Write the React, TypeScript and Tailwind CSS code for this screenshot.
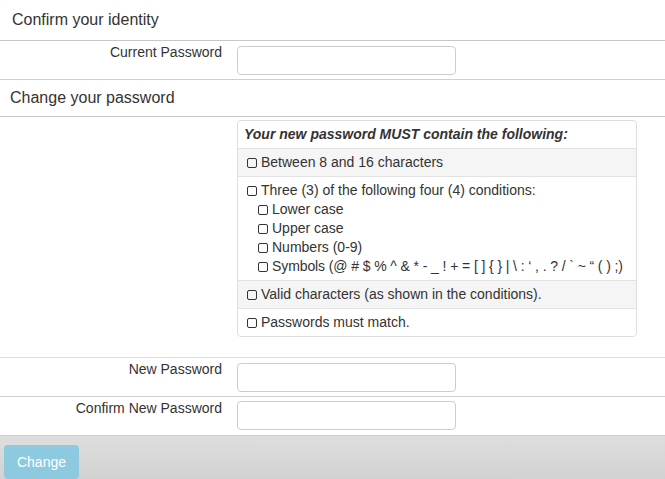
import React from "react";

function Box() {
  return (
    <span className="inline-block w-[10px] h-[10px] border border-[#333] rounded-[2px] mr-[4px] align-[-1px]" />
  );
}

function Row({ label }: { label: string }) {
  return (
    <div className="flex h-[39px] border-b border-[#cfcfcf]">
      <div className="w-[222px] text-right text-[14px] leading-[20px] pt-[1px]">{label}</div>
      <div className="ml-[15px] pt-[5px]">
        <input
          type="password"
          className="w-[219px] h-[29px] border border-[#ccc] rounded-[4px] bg-white outline-none"
        />
      </div>
    </div>
  );
}

export default function App() {
  return (
    <div
      className="w-[665px] h-[479px] bg-white text-[#333] overflow-hidden flex flex-col"
      style={{ fontFamily: '"Liberation Sans", Arial, sans-serif' }}
    >
      <div className="h-[41px] border-b border-[#c8c8c8] pl-[12px] text-[16px] leading-[20px] pt-[10px]">
        Confirm your identity
      </div>
      <Row label="Current Password" />
      <div className="h-[37px] border-b border-[#c8c8c8] pl-[10px] text-[16px] leading-[20px] pt-[8px]">
        Change your password
      </div>
      <div className="h-[241px] border-b border-[#dcdcdc] pl-[237px] pt-[3px]">
        <div className="w-[400px] border border-[#dedede] rounded-[4px] text-[14px] leading-[19px] overflow-hidden">
          <div className="h-[28px] px-[6px] pt-[4px] font-bold italic border-b border-[#e2e2e2]">
            Your new password MUST contain the following:
          </div>
          <div className="h-[28px] px-[9px] pt-[4px] bg-[#f5f5f5] border-b border-[#e2e2e2]">
            <Box />Between 8 and 16 characters
          </div>
          <div className="h-[104px] px-[9px] pt-[4px] border-b border-[#e2e2e2]">
            <div><Box />Three (3) of the following four (4) conditions:</div>
            <div className="pl-[11px]"><Box />Lower case</div>
            <div className="pl-[11px]"><Box />Upper case</div>
            <div className="pl-[11px]"><Box />Numbers (0-9)</div>
            <div className="pl-[11px] whitespace-nowrap tracking-[-0.1px]"><Box />Symbols (@ # $ % ^ &amp; * - _ ! + = [ ] {"{ }"} | \ : ‘ , . ? / ` ~ “ ( ) ;)</div>
          </div>
          <div className="h-[28px] px-[9px] pt-[4px] bg-[#f5f5f5] border-b border-[#e2e2e2]">
            <Box />Valid characters (as shown in the conditions).
          </div>
          <div className="h-[27px] px-[9px] pt-[4px]">
            <Box />Passwords must match.
          </div>
        </div>
      </div>
      <Row label="New Password" />
      <div className="flex h-[38px]">
        <div className="w-[222px] text-right text-[14px] leading-[20px] pt-[1px]">Confirm New Password</div>
        <div className="ml-[15px] pt-[4px]">
          <input
            type="password"
            className="w-[219px] h-[29px] border border-[#ccc] rounded-[4px] bg-white outline-none"
          />
        </div>
      </div>
      <div className="flex-1 border-t border-[#cfcfcf] bg-gradient-to-b from-[#dedede] to-[#d2d2d2] pl-[4px] pt-[9px]">
        <button className="w-[75px] h-[34px] rounded-[4px] bg-[#8dcae0] text-white text-[14px] leading-[20px]">
          Change
        </button>
      </div>
    </div>
  );
}
